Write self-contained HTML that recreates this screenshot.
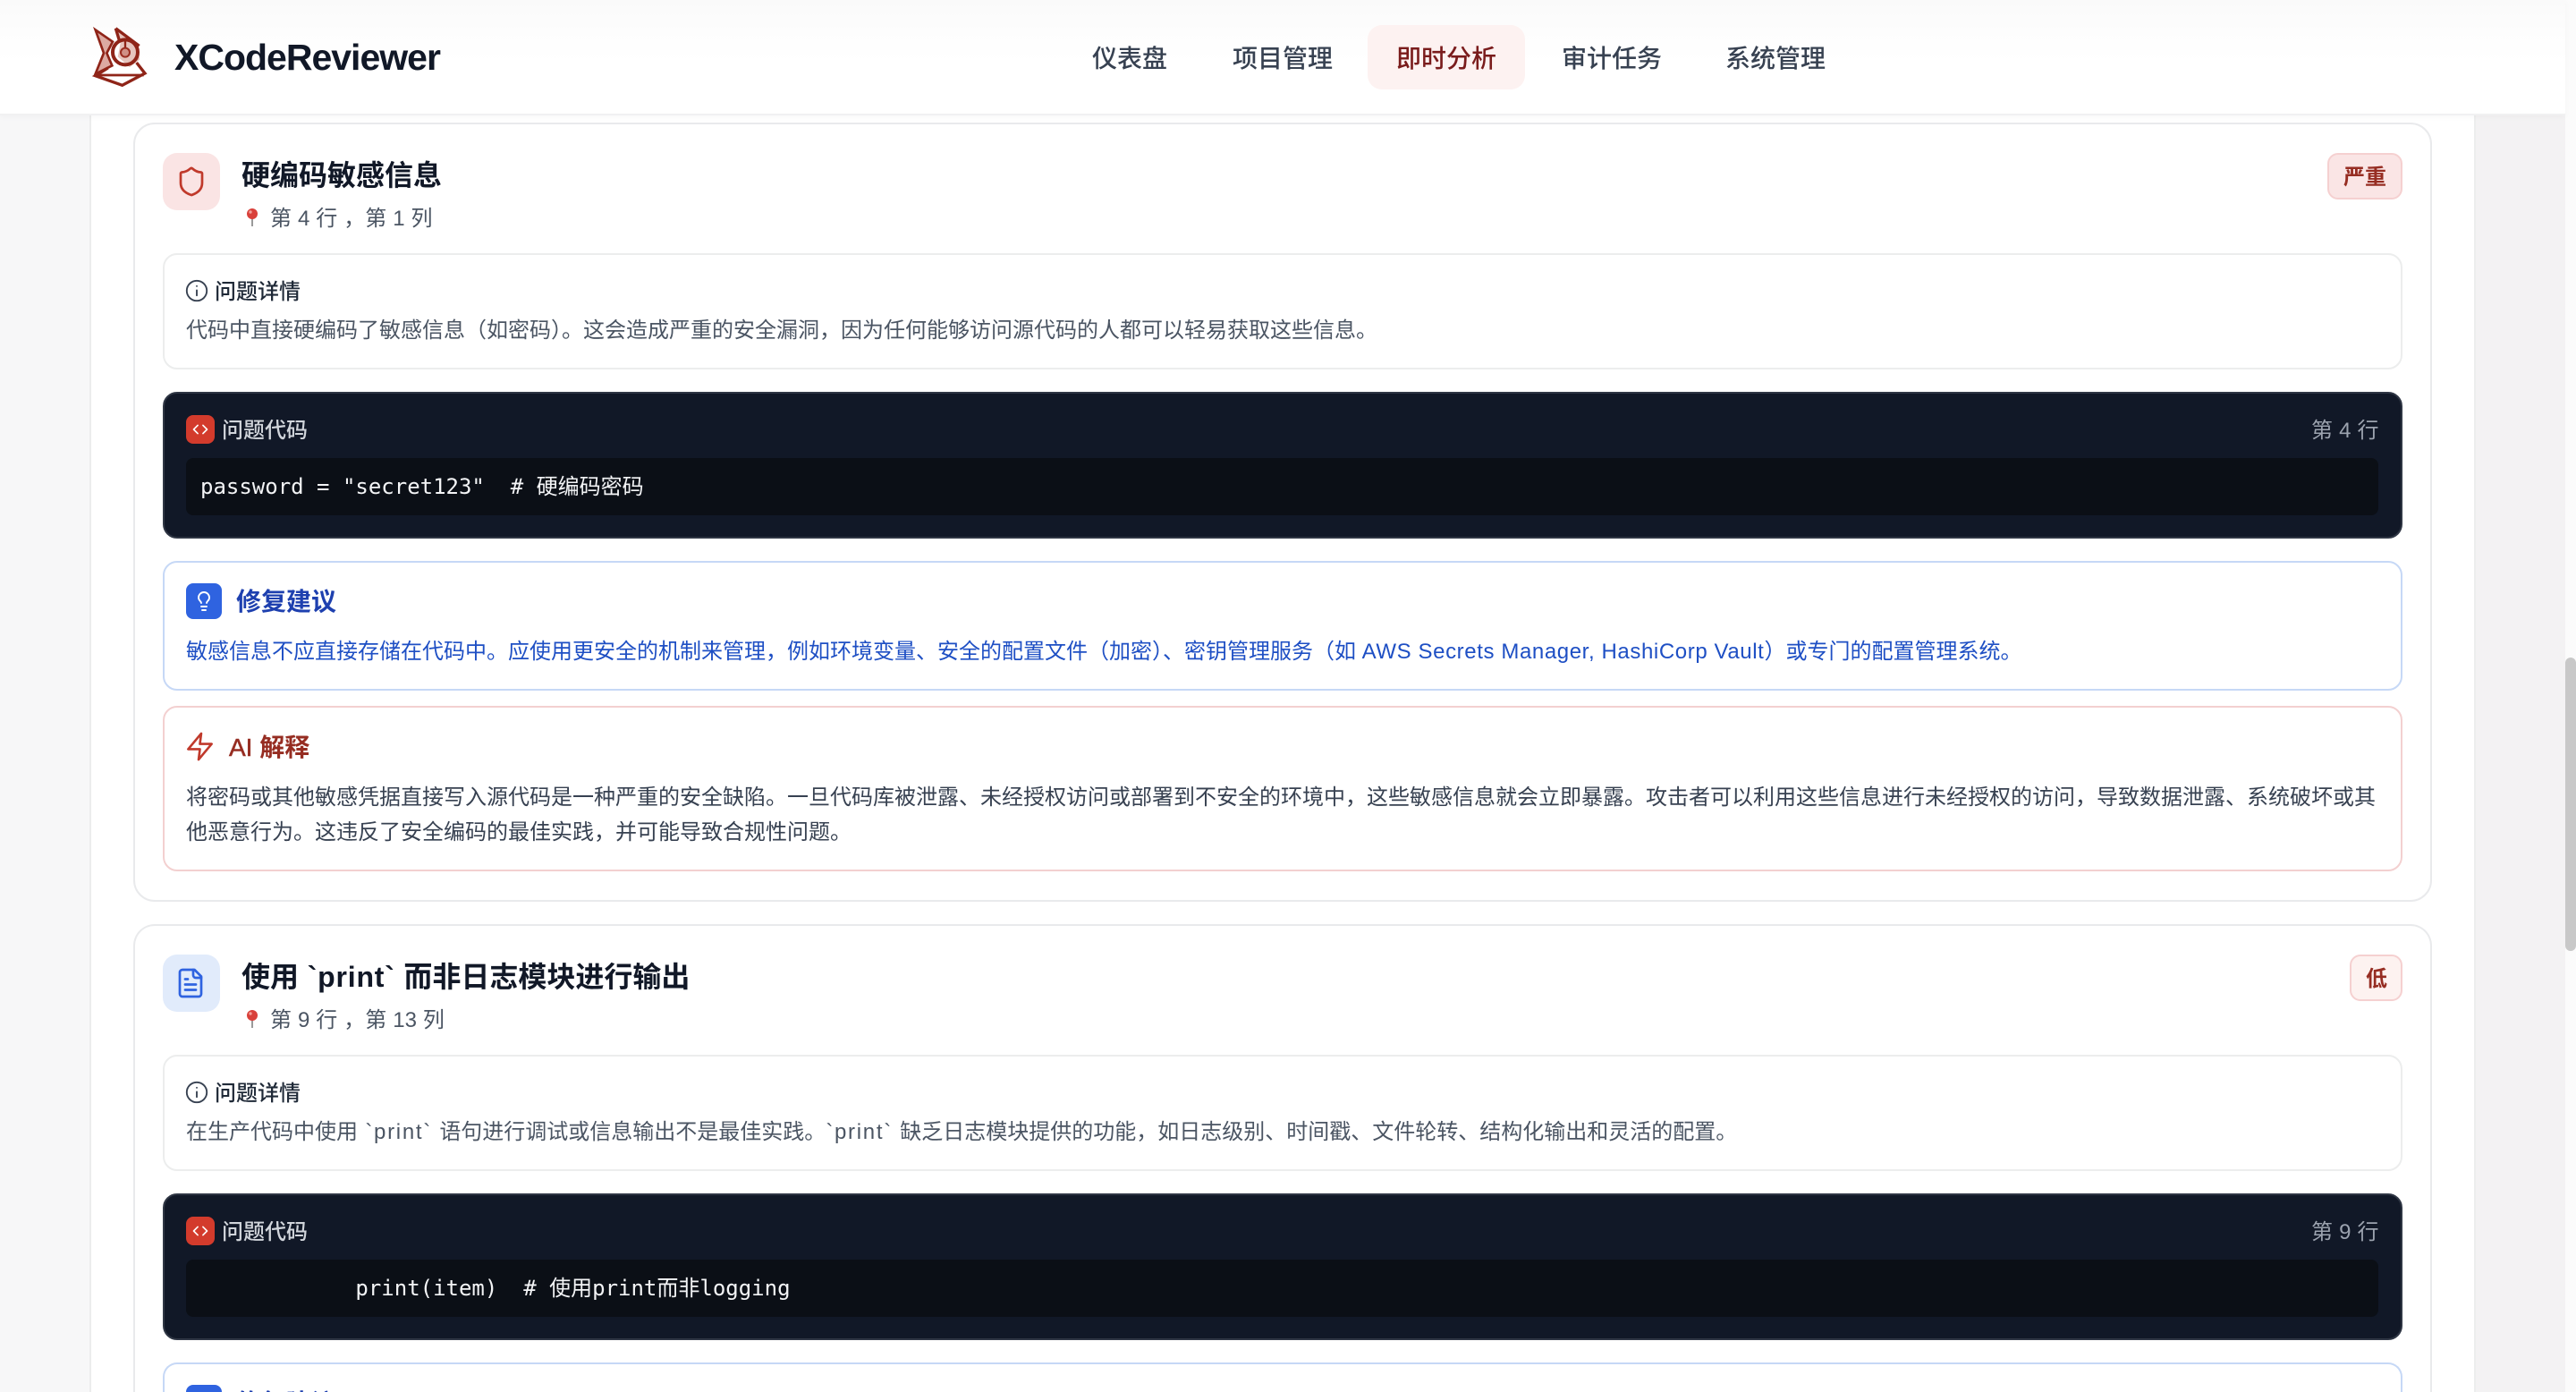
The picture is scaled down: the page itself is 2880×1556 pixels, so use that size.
<!DOCTYPE html>
<html lang="zh">
<head>
<meta charset="utf-8">
<title>XCodeReviewer</title>
<style>
html,body{margin:0;padding:0;width:2880px;height:1556px;overflow:hidden;background:#f3f2f3}
body{position:relative;font-family:"Liberation Sans","Noto Sans CJK SC",sans-serif}
.a{position:absolute;box-sizing:border-box}
.t{position:absolute;white-space:nowrap}
svg{position:absolute;display:block}
.ln{fill:none;stroke-linecap:round;stroke-linejoin:round}
.mono{font-family:"DejaVu Sans Mono","Noto Sans CJK SC",monospace}
.s24{font-size:24px;line-height:40px;height:40px}
</style>
</head>
<body>
<div class="a" style="left:0;top:0;width:100px;height:1556px;background:#f7f7f8"></div>
<div class="a" style="left:100px;top:0;width:2668px;height:1556px;background:#fff;border-left:2px solid #eceded;border-right:2px solid #eceded"></div>
<div class="a" style="left:2768px;top:0;width:100px;height:1556px;background:#f3f2f3"></div>
<div class="a" style="left:2868px;top:0;width:12px;height:1556px;background:#fbfbfb"></div>
<div class="a" style="left:2868px;top:735px;width:12px;height:328px;background:#c8c8c8;border-radius:6px"></div>

<!-- Card 1 -->
<div class="a" style="left:149px;top:137px;width:2570px;height:871px;border:2px solid #e9eaec;border-radius:24px;background:#fff"></div>
<div class="a" style="left:182px;top:171px;width:64px;height:64px;border-radius:16px;background:#fae4e4"></div>
<svg style="left:196px;top:185px" width="36" height="36" viewBox="0 0 24 24"><path class="ln" stroke="#c0392b" stroke-width="1.800" d="M20 13c0 5-3.500 7.500-7.660 8.950a1 1 0 0 1-.67-.01C7.500 20.500 4 18 4 13V6a1 1 0 0 1 1-1c2 0 4.500-1.200 6.240-2.720a1.170 1.170 0 0 1 1.520 0C14.510 3.810 17 5 19 5a1 1 0 0 1 1 1z"/></svg>
<div class="t" style="left:270px;top:172px;font-size:32px;line-height:48px;font-weight:700;color:#111827">硬编码敏感信息</div>
<svg style="left:272px;top:232px" width="20" height="22" viewBox="0 0 20 22"><rect x="9" y="10" width="2" height="11" fill="#9a9a9a"/><circle cx="10" cy="7" r="6" fill="#d9413b"/><circle cx="8" cy="5" r="1.700" fill="#f1a09a"/></svg>
<div class="t s24" style="left:302px;top:225px;color:#4b5563;word-spacing:.3px">第 4 行 ，第 1 列</div>

<div class="a" style="left:2602px;top:171px;width:84px;height:52px;background:#fae5e5;border:2px solid #f5d0d0;border-radius:12px"></div>
<div class="t s24" style="left:2620px;top:179px;font-weight:700;color:#962d22">严重</div>

<div class="a" style="left:182px;top:283px;width:2504px;height:130px;border:2px solid #eceded;border-radius:16px;background:#fff"></div>
<svg style="left:206px;top:311px" width="28" height="28" viewBox="0 0 24 24"><g class="ln" stroke="#374151" stroke-width="1.600"><circle cx="12" cy="12" r="9.600"/><path d="M12 16.500v-5M12 7.600h.01"/></g></svg>
<div class="t s24" style="left:240px;top:307px;font-weight:500;color:#1f2937">问题详情</div>
<div class="t s24" style="left:208px;top:350px;color:#4b5563">代码中直接硬编码了敏感信息（如密码）。这会造成严重的安全漏洞，因为任何能够访问源代码的人都可以轻易获取这些信息。</div>

<div class="a" style="left:182px;top:438px;width:2504px;height:164px;background:#111827;border:2px solid #2f3644;border-radius:16px"></div>
<div class="a" style="left:208px;top:464px;width:32px;height:32px;background:#d33b2c;border-radius:8px"></div>
<svg style="left:214px;top:470px" width="20" height="20" viewBox="0 0 24 24"><path class="ln" stroke="#fff" stroke-width="2" d="M15.500 6.500 21 12l-5.500 5.500M8.500 6.500 3 12l5.500 5.500"/></svg>
<div class="t s24" style="left:248px;top:462px;font-weight:500;color:#d1d5db">问题代码</div>
<div class="t s24" style="left:2584px;top:462px;color:#9ca3af;word-spacing:.4px">第 4 行</div>
<div class="a" style="left:208px;top:512px;width:2451px;height:64px;background:#0b0f16;border-radius:8px"></div>
<div class="t s24 mono" style="left:224px;top:524px;color:#f3f4f6;white-space:pre">password = "secret123"  # 硬编码密码</div>

<div class="a" style="left:182px;top:627px;width:2504px;height:145px;border:2px solid #c6d8f6;border-radius:16px;background:#fff"></div>
<div class="a" style="left:208px;top:652px;width:40px;height:40px;background:#2f63e0;border-radius:8px"></div>
<svg style="left:216px;top:660px" width="24" height="24" viewBox="0 0 24 24"><path class="ln" stroke="#fff" stroke-width="1.900" d="M15 14c.2-1 .7-1.700 1.500-2.500 1-.9 1.500-2.200 1.500-3.500A6 6 0 0 0 6 8c0 1 .2 2.200 1.500 3.500.7.7 1.300 1.500 1.500 2.500M9 18h6M10 22h4"/></svg>
<div class="t" style="left:264px;top:652px;font-size:28px;line-height:42px;font-weight:600;color:#1e40af">修复建议</div>
<div class="t s24" style="left:208px;top:709px;color:#1e4fc4">敏感信息不应直接存储在代码中。应使用更安全的机制来管理，例如环境变量、安全的配置文件（加密）、密钥管理服务（如 <span style="letter-spacing:.6px">AWS Secrets Manager, HashiCorp Vault</span>）或专门的配置管理系统。</div>

<div class="a" style="left:182px;top:789px;width:2504px;height:185px;border:2px solid #f3d0d0;border-radius:16px;background:#fff"></div>
<svg style="left:206px;top:817px" width="35" height="35" viewBox="0 0 24 24"><path class="ln" stroke="#c0392b" stroke-width="1.800" d="M13 2 3 14h9l-1 8 10-12h-9z"/></svg>
<div class="t" style="left:256px;top:815px;font-size:28px;line-height:42px;font-weight:600;color:#962d22"><span style="font-weight:400;-webkit-text-stroke:.5px #962d22">AI</span> 解释</div>
<div class="t s24" style="left:208px;top:872px;color:#374151">将密码或其他敏感凭据直接写入源代码是一种严重的安全缺陷。一旦代码库被泄露、未经授权访问或部署到不安全的环境中，这些敏感信息就会立即暴露。攻击者可以利用这些信息进行未经授权的访问，导致数据泄露、系统破坏或其</div>
<div class="t s24" style="left:208px;top:911px;color:#374151">他恶意行为。这违反了安全编码的最佳实践，并可能导致合规性问题。</div>

<!-- Card 2 -->
<div class="a" style="left:149px;top:1033px;width:2570px;height:523px;border:2px solid #e9eaec;border-bottom:0;border-radius:24px 24px 0 0;background:#fff"></div>
<div class="a" style="left:182px;top:1067px;width:64px;height:64px;border-radius:16px;background:#e1ebfb"></div>
<svg style="left:195px;top:1081px" width="36" height="36" viewBox="0 0 24 24"><g class="ln" stroke="#2f63e0" stroke-width="1.800"><path d="M15 2H6a2 2 0 0 0-2 2v16a2 2 0 0 0 2 2h12a2 2 0 0 0 2-2V7Z"/><path d="M14 2v4a2 2 0 0 0 2 2h4"/><path d="M10 9H8M16 13H8M16 17H8"/></g></svg>
<div class="t" style="left:270px;top:1068px;font-size:32px;line-height:48px;font-weight:700;color:#111827">使用<span style="letter-spacing:.8px;white-space:pre"> `print` </span>而非日志模块进行输出</div>
<svg style="left:272px;top:1128px" width="20" height="22" viewBox="0 0 20 22"><rect x="9" y="10" width="2" height="11" fill="#9a9a9a"/><circle cx="10" cy="7" r="6" fill="#d9413b"/><circle cx="8" cy="5" r="1.700" fill="#f1a09a"/></svg>
<div class="t s24" style="left:302px;top:1121px;color:#4b5563;word-spacing:.3px">第 9 行 ，第 13 列</div>

<div class="a" style="left:2627px;top:1067px;width:59px;height:52px;background:#fdf2f0;border:2px solid #f5d0d0;border-radius:12px"></div>
<div class="t s24" style="left:2645px;top:1075px;font-weight:700;color:#962d22">低</div>

<div class="a" style="left:182px;top:1179px;width:2504px;height:130px;border:2px solid #eceded;border-radius:16px;background:#fff"></div>
<svg style="left:206px;top:1207px" width="28" height="28" viewBox="0 0 24 24"><g class="ln" stroke="#374151" stroke-width="1.600"><circle cx="12" cy="12" r="9.600"/><path d="M12 16.500v-5M12 7.600h.01"/></g></svg>
<div class="t s24" style="left:240px;top:1203px;font-weight:500;color:#1f2937">问题详情</div>
<div class="t s24" style="left:208px;top:1246px;color:#4b5563">在生产代码中使用<span style="letter-spacing:1.7px;white-space:pre"> `print` </span>语句进行调试或信息输出不是最佳实践。<span style="letter-spacing:1.7px;white-space:pre">`print` </span>缺乏日志模块提供的功能，如日志级别、时间戳、文件轮转、结构化输出和灵活的配置。</div>

<div class="a" style="left:182px;top:1334px;width:2504px;height:164px;background:#111827;border:2px solid #2f3644;border-radius:16px"></div>
<div class="a" style="left:208px;top:1360px;width:32px;height:32px;background:#d33b2c;border-radius:8px"></div>
<svg style="left:214px;top:1366px" width="20" height="20" viewBox="0 0 24 24"><path class="ln" stroke="#fff" stroke-width="2" d="M15.500 6.500 21 12l-5.500 5.500M8.500 6.500 3 12l5.500 5.500"/></svg>
<div class="t s24" style="left:248px;top:1358px;font-weight:500;color:#d1d5db">问题代码</div>
<div class="t s24" style="left:2584px;top:1358px;color:#9ca3af;word-spacing:.4px">第 9 行</div>
<div class="a" style="left:208px;top:1408px;width:2451px;height:64px;background:#0b0f16;border-radius:8px"></div>
<div class="t s24 mono" style="left:224px;top:1420px;color:#f3f4f6;white-space:pre">            print(item)  # 使用print而非logging</div>

<div class="a" style="left:182px;top:1523px;width:2504px;height:33px;border:2px solid #c6d8f6;border-bottom:0;border-radius:16px 16px 0 0;background:#fff"></div>
<div class="a" style="left:208px;top:1548px;width:40px;height:8px;background:#2f63e0;border-radius:8px 8px 0 0"></div>
<div class="a" style="left:264px;top:1548px;width:120px;height:8px;overflow:hidden"><div class="t" style="left:0;top:0;font-size:28px;line-height:42px;font-weight:600;color:#1e40af">修复建议</div></div>

<!-- Header -->
<div class="a" style="left:0;top:0;width:2868px;height:129px;background:linear-gradient(180deg,#fafafa 0,#fdfdfd 35px,#fff 70px);border-bottom:2px solid #f1f1f2;box-shadow:0 2px 6px rgba(0,0,0,.03)"></div>
<svg style="left:90px;top:20px" width="90" height="80" viewBox="0 0 270 240">
  <path d="M50 40 108 80 88 118 106 160 50 188 78 118Z" fill="#dcaaa2" stroke="#8f2418" stroke-width="8" stroke-linejoin="miter"/>
  <path d="M118 35 195 92 198 140 165 165 125 130 135 80Z" fill="#e6c4bd"/>
  <path d="M118 35 197 94M118 35 132 82" fill="none" stroke="#8f2418" stroke-width="10"/>
  <circle cx="150" cy="115" r="42" fill="none" stroke="#8f2418" stroke-width="12"/>
  <circle cx="150" cy="116" r="15" fill="#cf8f85" stroke="#9a2c20" stroke-width="6"/>
  <path d="M150 100V70" stroke="#8f2418" stroke-width="7"/>
  <path d="M92 168 50 194 140 226 216 186 188 150" fill="none" stroke="#8f2418" stroke-width="10" stroke-linejoin="miter"/>
  <path d="M56 192H212" stroke="#8f2418" stroke-width="8"/>
</svg>
<div class="t" style="left:195px;top:38px;font-size:41px;line-height:52px;font-weight:700;letter-spacing:-1px;color:#111827">XCodeReviewer</div>

<div class="a" style="left:1529px;top:28px;width:176px;height:72px;background:#fdf2f1;border-radius:16px"></div>
<div class="t" style="left:1221px;top:45px;font-size:28px;line-height:42px;font-weight:500;color:#374151">仪表盘</div>
<div class="t" style="left:1378px;top:45px;font-size:28px;line-height:42px;font-weight:500;color:#374151">项目管理</div>
<div class="t" style="left:1561px;top:45px;font-size:28px;line-height:42px;font-weight:500;color:#7a1c1c">即时分析</div>
<div class="t" style="left:1746px;top:45px;font-size:28px;line-height:42px;font-weight:500;color:#374151">审计任务</div>
<div class="t" style="left:1929px;top:45px;font-size:28px;line-height:42px;font-weight:500;color:#374151">系统管理</div>
</body>
</html>
